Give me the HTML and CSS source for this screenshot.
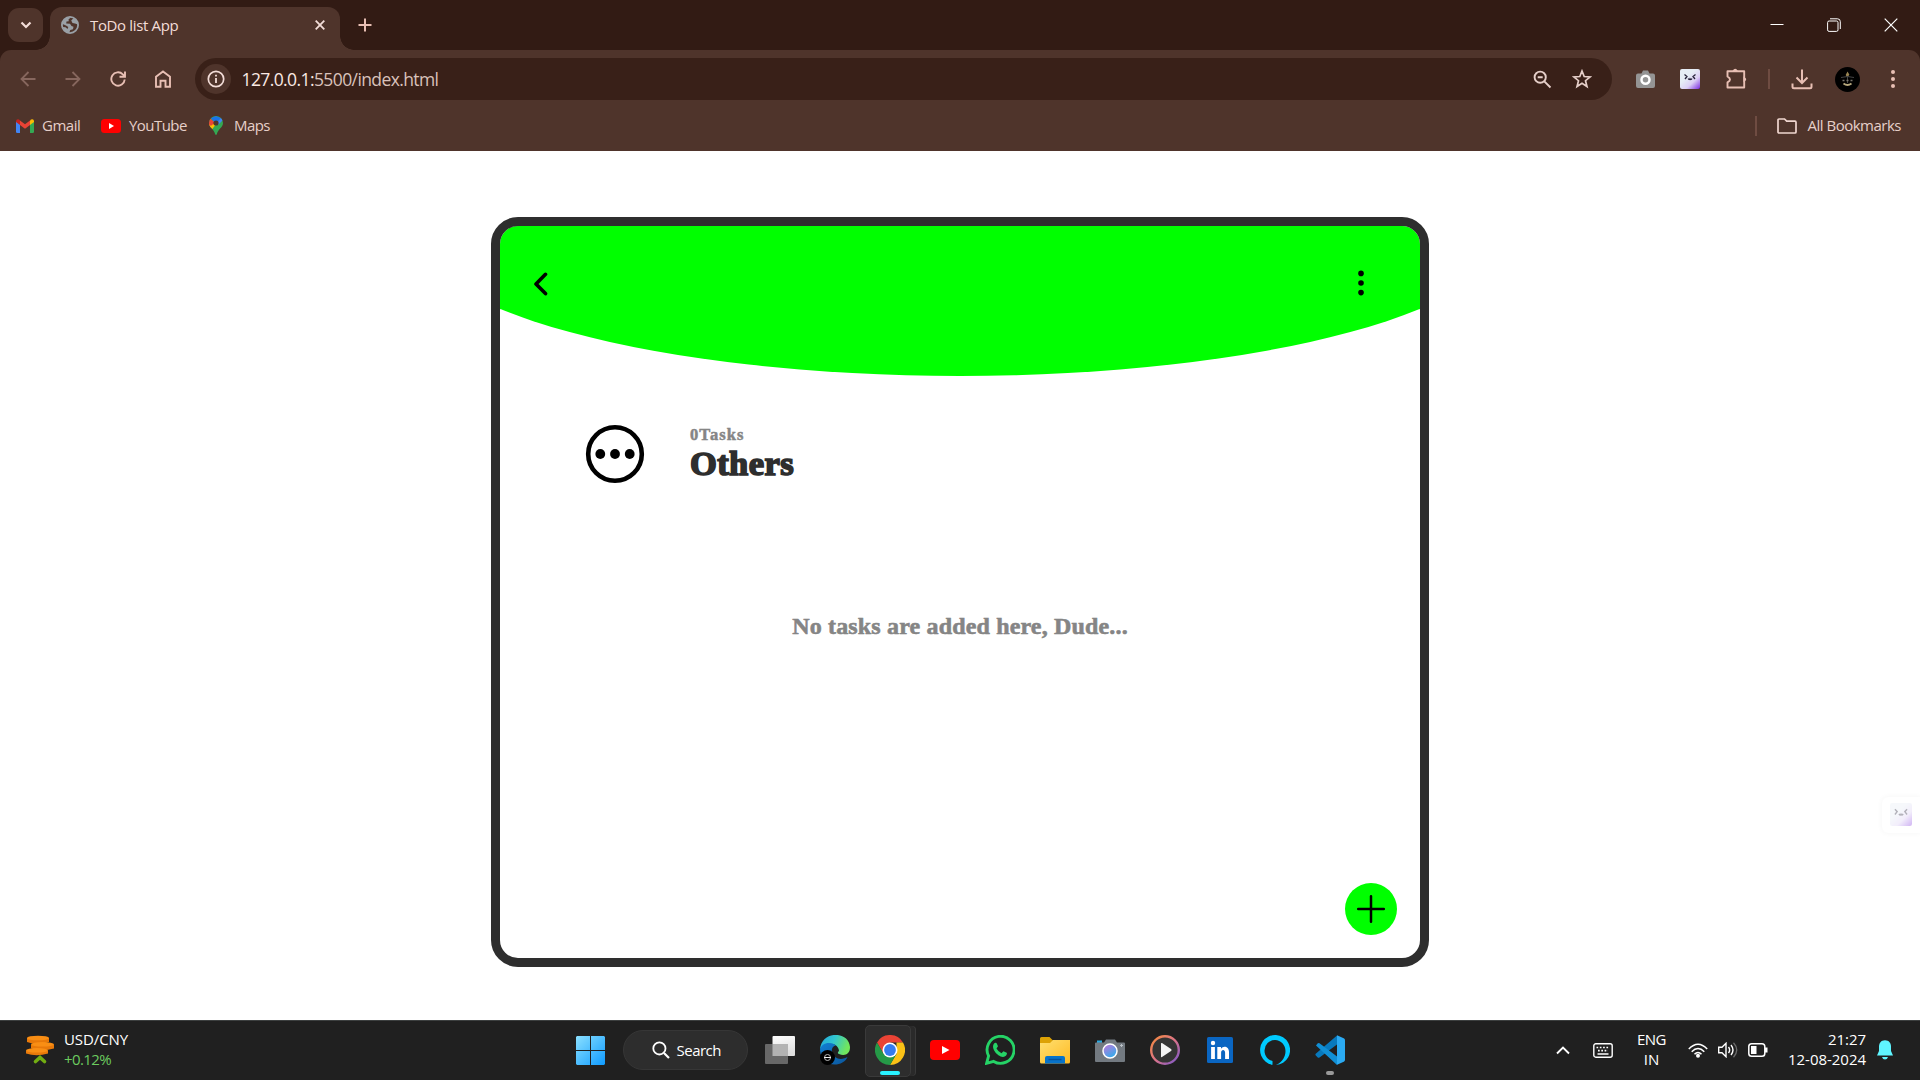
FILE: index.html
```html
<!DOCTYPE html>
<html lang="en">
<head>
<meta charset="utf-8">
<title>ToDo list App</title>
<link rel="stylesheet" href="styles.css">
</head>
<body>
<header class="browser">
  <div class="tabstrip">
    <button class="tab-search" aria-label="Search tabs"><svg width="12" height="8" viewBox="0 0 12 8"><path d="M1.5 1.5 6 6l4.500-4.500" fill="none" stroke="#f3ddd8" stroke-width="2.200"/></svg></button>
    <div class="tab">
      <svg class="globe" width="18" height="18" viewBox="0 0 18 18"><circle cx="9" cy="9" r="8.100" fill="none" stroke="#9aa0a6" stroke-width="1.800"/><path d="M2 5.500 5.500 1.500 10 1.300 7.500 3.500l.3 1.700-2.300.3-.3 2 3.800.2 1.500 2.300 2 .7-.5 2.500-2.700.8-1 2.500-4-1-3-4.500 3.200.3 2 1.700.8-2L5 9.500 1.500 8z" fill="#9aa0a6"/><path d="m12.500 2.200-2.300 2.300L11.500 7l2.500.5 3 1-.5-3.500z" fill="#9aa0a6"/></svg>
      <span class="tab-title">ToDo list App</span>
      <svg class="tab-close" width="10" height="10" viewBox="0 0 10 10"><path d="m.7.7 8.600 8.600m0-8.600L.7 9.300" stroke="#f3ddd8" stroke-width="1.800"/></svg>
    </div>
    <svg class="new-tab" width="14" height="14" viewBox="0 0 14 14"><path d="M7 .5v13M.5 7h13" stroke="#e8bfb4" stroke-width="2"/></svg>
    <div class="window-buttons">
      <svg width="14" height="14" viewBox="0 0 14 14"><path d="M.5 6.500h13" stroke="#fff" stroke-width="1"/></svg>
      <svg width="14" height="14" viewBox="0 0 14 14" fill="none" stroke="#fff"><rect x=".6" y="3" width="10.400" height="10.400" rx="1.500"/><path d="M3 .8h7.500a2.800 2.800 0 0 1 2.800 2.800v7.400"/></svg>
      <svg width="14" height="14" viewBox="0 0 14 14"><path d="m.7.7 12.600 12.600m0-12.600L.7 13.300" stroke="#fff" stroke-width="1.200"/></svg>
    </div>
  </div>
  <div class="toolbar">
    <nav class="nav-icons">
      <svg class="dim" width="16" height="16" viewBox="0 0 16 16"><path d="M15.500 8H1.500M8.500 1 1.500 8l7 7"/></svg>
      <svg class="dim" width="16" height="16" viewBox="0 0 16 16"><path d="M.5 8h14M7.500 1l7 7-7 7"/></svg>
      <svg width="16" height="16" viewBox="0 0 16 16"><path d="M14.700 8.500A6.700 6.700 0 1 1 12.800 3.300L15 5.500M15 .5v5.300H9.500" stroke-width="1.900"/></svg>
      <svg width="16" height="18" viewBox="0 0 16 18"><path d="M1 16.800V6.800L8 1.500l7 5.300v10h-4.500v-6h-5v6z" stroke-width="1.900"/></svg>
    </nav>
    <div class="omnibox">
      <span class="site-info"><svg width="18" height="18" viewBox="0 0 18 18"><circle cx="9" cy="9" r="7.700" fill="none" stroke="#f3ddd8" stroke-width="1.700"/><path d="M9 8v5M9 4.700v1.900" stroke="#f3ddd8" stroke-width="1.800"/></svg></span>
      <span class="url"><b>127.0.0.1:</b>5500/index.html</span>
      <svg class="zoom-icon" width="19" height="19" viewBox="0 0 19 19" fill="none" stroke="#e6cfc9" stroke-width="1.900"><circle cx="7.200" cy="7.200" r="5.600"/><path d="m11.300 11.300 6.200 6.200M4.700 7.200h5"/></svg>
      <svg class="star" width="20" height="20" viewBox="0 0 20 20"><path d="m10 2 2.200 5.500 5.900.4-4.600 3.800 1.500 5.800L10 14.300l-5 3.200 1.500-5.800-4.600-3.800 5.900-.4z" fill="none" stroke="#e6cfc9" stroke-width="1.700"/></svg>
    </div>
    <div class="extensions">
      <svg class="ext-camera" width="19" height="18" viewBox="0 0 19 18"><path d="M2 3.500h3.500L7 .5h5l1.500 3H17q2 0 2 2V16q0 2-2 2H2q-2 0-2-2V5.500q0-2 2-2z" fill="#949494"/><circle cx="9.500" cy="9.800" r="4" fill="#949494" stroke="#fff" stroke-width="2.500"/></svg>
      <svg class="ext-face" width="20" height="20" viewBox="0 0 20 20"><defs><linearGradient id="face" x1=".4" y1=".35" x2="1" y2="1"><stop stop-color="#e6edf5"/><stop offset=".45" stop-color="#dccff5"/><stop offset="1" stop-color="#7b2be0"/></linearGradient></defs><rect width="20" height="20" rx="2" fill="url(#face)"/><path d="m4.500 5.500 2.500 2-2 2.500M15.500 5.500l-2.500 2 2 2.500M8.200 9.500q1 1.800 1.800.3 1 1.500 1.900-.3" fill="none" stroke="#27233b" stroke-width="1.300"/></svg>
      <svg class="puzzle" width="22" height="22" viewBox="0 0 22 22"><path d="M2.500 3.200h16.700v16.300H2.500v-5.200q5-2.800 0-5.800z" fill="none" stroke="#e8bfb4" stroke-width="1.900" stroke-linejoin="round"/><path d="M18.500 8.500q5.500 2.800 0 5.600zM7.500 3q2.700-4.600 5.400 0z" fill="#e8bfb4"/></svg>
      <i class="divider"></i>
      <svg class="download" width="22" height="21" viewBox="0 0 22 21"><path d="M11 .5v13M5.500 8.500 11 14l5.500-5.500M1.500 14.500v3.300q0 1.500 1.500 1.500h16q1.500 0 1.500-1.500v-3.300" fill="none" stroke="#e8bfb4" stroke-width="2"/></svg>
      <svg class="avatar" width="25" height="25" viewBox="0 0 25 25"><circle cx="12.500" cy="12.500" r="12.500" fill="#000"/><path d="m12.500 4.500 1.800 3-1.800 3.500-1.800-3z" fill="#978352"/><path d="M6 10.500q6.500-2 13 0M12.500 9v7" stroke="#454545" fill="none"/><path d="M7.500 13.500h2m2 0h2m2 0h2" stroke="#77736a" stroke-width="1.500"/><path d="M8.500 16.500q4 3 8 0" stroke="#b6a77c" stroke-width="1.800" fill="none"/></svg>
      <svg class="menu-dots" width="4" height="18" viewBox="0 0 4 18" fill="#e8bfb4"><circle cx="2" cy="2" r="2"/><circle cx="2" cy="9" r="2"/><circle cx="2" cy="16" r="2"/></svg>
    </div>
  </div>
  <div class="bookmarks">
    <svg width="18" height="14" viewBox="0 0 18 14"><path d="M0 2v10.800Q0 14 1.200 14H4V5z" fill="#4285f4"/><path d="M18 2v10.800q0 1.200-1.200 1.200H14V5z" fill="#34a853"/><path d="M14 1.500V6l4-3V2q-.3-2.600-3-1.500z" fill="#fbbc04"/><path d="M0 2.500V3l4 3V1.500L3 .5Q.3-.3 0 2.500z" fill="#c5221f"/><path d="m4 1.500 5 3.800 5-3.800V6L9 9.800 4 6z" fill="#ea4335"/></svg>
    <span class="bm-gmail">Gmail</span>
    <svg width="20" height="14" viewBox="0 0 20 14"><rect width="20" height="14" rx="3.500" fill="red"/><path d="m8 4 5 3-5 3z" fill="#fff"/></svg>
    <span class="bm-youtube">YouTube</span>
    <svg width="14" height="19" viewBox="0 0 14 19"><defs><clipPath id="pin"><path d="M7 0a7 7 0 0 1 7 7c0 4.500-5 6-6.200 11.300q-.8 1.400-1.600 0C5 13 0 11.500 0 7a7 7 0 0 1 7-7z"/></clipPath></defs><g clip-path="url(#pin)"><path d="M0 0h14v19H0z" fill="#34a853"/><path d="M0 14V8l5.500-3L12 1.500 3 13.500z" fill="#fbbc04"/><path d="M0 1.500 6 6.500 2.500 9.500H0z" fill="#ea4335"/><path d="M1.800 2 7 0l5.300 2L7 8z" fill="#1a73e8"/><path d="m12.200 1.800-5 6L9 9l5-5z" fill="#4285f4"/></g><circle cx="7" cy="7" r="2.600" fill="#4f342b"/></svg>
    <span class="bm-maps">Maps</span>
    <i class="divider bookmarks-divider"></i>
    <svg width="20" height="16" viewBox="0 0 20 16"><path d="M2 1h5.500l2.200 2.200H18q1 0 1 1V14q0 1-1 1H2q-1 0-1-1V2q0-1 1-1z" fill="none" stroke="#f0d6cf" stroke-width="1.700"/></svg>
    <span class="bm-all">All Bookmarks</span>
  </div>
</header>

<main class="page">
  <section class="card">
    <header class="card-header">
      <svg width="15" height="24" viewBox="0 0 15 24"><path d="M12.500 2.300 3 12l9.500 9.600" fill="none" stroke="#000" stroke-width="3.600" stroke-linecap="round" stroke-linejoin="round"/></svg>
      <svg class="card-menu" width="6" height="26" viewBox="0 0 6 26"><circle cx="3" cy="3.400" r="2.800"/><circle cx="3" cy="13" r="2.800"/><circle cx="3" cy="22.600" r="2.800"/></svg>
    </header>
    <div class="category">
      <svg width="60" height="60" viewBox="0 0 60 60"><circle cx="30" cy="30" r="26.800" fill="none" stroke="#000" stroke-width="4.600"/><circle cx="15.300" cy="30" r="4.900"/><circle cx="30" cy="30" r="4.900"/><circle cx="44.700" cy="30" r="4.900"/></svg>
      <div class="category-text">
        <p class="task-count">0Tasks</p>
        <h1>Others</h1>
      </div>
    </div>
    <p class="empty">No tasks are added here, Dude...</p>
    <button class="add" aria-label="Add task"><svg width="30" height="30" viewBox="0 0 30 30"><path d="M15 2.200v25.600M2.200 15h25.600" stroke="#000" stroke-width="2.500" stroke-linecap="round"/></svg></button>
  </section>
  <div class="floating-helper"><svg width="22" height="23" viewBox="0 0 20 20" preserveAspectRatio="none"><rect width="20" height="20" rx="2" fill="url(#face)"/><path d="m4.500 5.500 2 2-2 2.500M15.500 5.500l-2 2 2 2.500M8.200 9.500q1 1.800 1.800.3 1 1.500 1.900-.3" fill="none" stroke="#27233b" stroke-width="1.300"/></svg></div>
</main>

<footer class="taskbar">
  <div class="widget">
    <svg width="29" height="30" viewBox="0 0 29 30"><g fill="#e8790a"><path d="M1 3v4q10.500 4 22 0V3zM5 9.500v4q11 3.500 23 0v-4zM0 15.500v3q10.500 3.500 22 0v-3z"/></g><g fill="#f98e14"><ellipse cx="12" cy="3" rx="11" ry="2.300"/><ellipse cx="16.500" cy="9.300" rx="11.500" ry="2.300"/><ellipse cx="11" cy="15.300" rx="11" ry="2.300"/></g><path d="m9.500 26.500 4.500-4 4.500 4" fill="none" stroke="#72ad12" stroke-width="3.600" stroke-linecap="round"/></svg>
    <div class="widget-text"><span class="pair">USD/CNY</span><span class="change">+0.12%</span></div>
  </div>
  <div class="apps">
    <svg class="start" width="29" height="29" viewBox="0 0 29 29"><defs><linearGradient id="win" x2="1" y2="1" gradientUnits="objectBoundingBox"><stop stop-color="#8be0ff"/><stop offset="1" stop-color="#0f9bff"/></linearGradient><clipPath id="panes"><path d="M1 0h13v14H0V1zM15 0h13l1 1v13H15zM0 15h14v14H1l-1-1zM15 15h14v13l-1 1H15z"/></clipPath></defs><path d="M0 0h29v29H0z" fill="url(#win)" clip-path="url(#panes)"/></svg>
    <div class="search"><svg width="18" height="18" viewBox="0 0 18 18"><circle cx="7.400" cy="7.400" r="6.100" fill="none" stroke="#fff" stroke-width="1.800"/><path d="m12 12 5 5" stroke="#fff" stroke-width="2.200"/></svg><span>Search</span></div>
    <div class="app"><svg width="30" height="30" viewBox="0 0 30 30"><defs><linearGradient id="tv" y2="1" x2=".3"><stop stop-color="#fff"/><stop offset="1" stop-color="#dedede"/></linearGradient></defs><rect x="7.500" y="1" width="22.500" height="20" rx="1" fill="url(#tv)"/><rect x="0" y="9" width="23" height="20" rx="1" fill="#686868"/><rect x="7.500" y="9" width="15.500" height="12" fill="#b3b3b3"/></svg></div>
    <div class="app"><svg width="30" height="30" viewBox="0 0 30 30"><defs><linearGradient id="edgeTop" x2="1" y2=".3"><stop stop-color="#21a7dd"/><stop offset=".5" stop-color="#31c5d0"/><stop offset="1" stop-color="#71e65d"/></linearGradient><linearGradient id="edgeLow" y2="1"><stop stop-color="#117fd5"/><stop offset="1" stop-color="#0b569b"/></linearGradient></defs><path d="M0 14C2-5 29-4 30 12c0 8-6 9-11 7-2-1-1-2 0-3 0-6-9-12-19-2z" fill="url(#edgeTop)"/><path d="M0 15C1 8 10 6 16 10.500c-5 .5-6 8-1 11.500 4 3 9 2 12.500 0C23 33 1 33 0 15z" fill="url(#edgeLow)"/><circle cx="7.500" cy="22.500" r="7.500" fill="#000"/><circle cx="7.500" cy="22.500" r="3" fill="none" stroke="#bbb"/><path d="M4 22.500h7" stroke="#eee"/></svg></div>
    <div class="app active"><svg width="30" height="30" viewBox="0 0 30 30"><path d="M2 7.500a15 15 0 0 1 26 0H15L8.500 18.700z" fill="#ea4335"/><path d="M28 7.500A15 15 0 0 1 15 30l6.500-11.300L21.500 7.500z" fill="#fbc116"/><path d="M2 7.500 8.500 18.700 15 22.500l6.500-3.800L15 30A15 15 0 0 1 2 7.500z" fill="#259947"/><circle cx="15" cy="15" r="7.500" fill="#fff"/><circle cx="15" cy="15" r="5.900" fill="#367bef"/></svg></div>
    <div class="app"><svg width="30" height="30" viewBox="0 0 30 30"><rect y="5" width="30" height="20" rx="4" fill="red"/><path d="m12 11 7.500 4-7.500 4z" fill="#fff"/></svg></div>
    <div class="app"><svg width="30" height="30" viewBox="0 0 30 30"><path d="m1.600 28.300 2-7.300A13.500 13.500 0 1 1 8.700 26.400z" fill="none" stroke="#25d366" stroke-width="2.900"/><path d="M9.700 8q1.600-1 2.300 1l1 2.300-1.500 2.200q1.700 3.200 5 4.800l1.900-2.100 3.300 1.600c.8.500-.2 4.200-3.800 4.200C12 21.500 4.700 12 9.700 8z" fill="#25d366"/></svg></div>
    <div class="app"><svg width="30" height="30" viewBox="0 0 30 30"><defs><linearGradient id="fold" x2="1" y2="1"><stop stop-color="#ffdf70"/><stop offset="1" stop-color="#ffbb24"/></linearGradient></defs><path d="M0 3.500Q0 2 1.500 2h8L13 5.500h15.500Q30 5.500 30 7v8H0z" fill="#dda205"/><path d="M0 8h10l3-3h17v22q0 1.500-1.500 1.500h-27Q0 28.500 0 27z" fill="url(#fold)"/><path d="M5 28.500V23q0-2 2-2h16q2 0 2 2v5.500z" fill="#0873ca"/><path d="M8.500 24.500h13" stroke="#07529d" stroke-width="1.400"/></svg></div>
    <div class="app"><svg width="30" height="30" viewBox="0 0 30 30"><defs><linearGradient id="lens" x1=".2" x2=".8" y2="1"><stop stop-color="#bd78db"/><stop offset="1" stop-color="#27b1ed"/></linearGradient></defs><path d="M2 5.500h5v3H2z" fill="#29a9e2"/><path d="M1 7.500h8l2-3h9l2 3h7q1 0 1 1V26q0 1-1 1H1q-1 0-1-1V8.500q0-1 1-1z" fill="#737a81"/><circle cx="15" cy="16" r="7" fill="url(#lens)" stroke="#fff" stroke-width="1.500"/><path d="M26.500 9v3M25 10.500h3" stroke="#bac0c5"/></svg></div>
    <div class="app"><svg width="30" height="30" viewBox="0 0 30 30"><defs><linearGradient id="ring" x2="1" y2="1"><stop stop-color="#f58b39"/><stop offset=".5" stop-color="#dc7489"/><stop offset="1" stop-color="#7655cd"/></linearGradient></defs><circle cx="15" cy="15" r="13.800" fill="#343434" stroke="url(#ring)" stroke-width="2.400"/><path d="M11 8.500q0-1 1-.4l9 5.900q1.400 1 0 2l-9 5.900q-1 .6-1-.4z" fill="#f4f4f4"/></svg></div>
    <div class="app"><svg width="30" height="30" viewBox="0 0 30 30"><rect x="2" y="2" width="26" height="26" rx="1.500" fill="#0a66c2"/><circle cx="8" cy="8" r="2.200" fill="#fff"/><path d="M6.100 12h3.800v12H6.100zM12.300 12H16v1.700c2-3.200 8-2.800 8 3.400V24h-3.900v-6.300c0-3.600-4-3.300-4 0V24h-3.800z" fill="#fff"/></svg></div>
    <div class="app"><svg width="30" height="30" viewBox="0 0 30 30"><path d="M12.500 29.800A15 15 0 1 1 16 30C23 27 25.500 21 25.500 16 25.500 10 21 5 15 5A10.500 10.500 0 0 0 4.500 15.500c0 5.500 3.500 9.500 8 10.500z" fill="#00caff"/></svg></div>
    <div class="app running"><svg width="30" height="30" viewBox="0 0 30 30"><path d="m1 18.500 21-18L24 8 4.500 22.500q-1 .8-2-.2L.8 20.500q-.9-1 .2-2z" fill="#0879bd"/><path d="m1 10.500 1.500-2q1-1 2-.2L24 23l-2 7z" fill="#118fd5"/><path d="m22 .3 6.700 3Q30 4 30 5.300v19.400q0 1.300-1.300 2L22 29.800z" fill="#2baaf2"/></svg></div>
  </div>
  <div class="tray">
    <svg class="chevron" width="14" height="9" viewBox="0 0 14 9"><path d="m1 7.500 6-6 6 6" fill="none" stroke="#fff" stroke-width="1.900"/></svg>
    <svg class="keyboard" width="20" height="15" viewBox="0 0 20 15"><rect x=".8" y=".8" width="18.400" height="13.400" rx="2" fill="none" stroke="#fff" stroke-width="1.400"/><path d="M3.500 4.500h13M5 7.700h10" stroke="#fff" stroke-width="1.700" stroke-dasharray="1.700 1.600"/><path d="M4.500 11h11" stroke="#fff" stroke-width="1.500"/></svg>
    <div class="language"><span class="eng">ENG</span><span>IN</span></div>
    <svg class="wifi" width="20" height="15" viewBox="0 0 20 15"><path d="M.8 6q9.200-9.500 18.400 0M3.700 8.700q6.300-6.500 12.600 0M6.500 11.300q3.500-3.600 7 0" fill="none" stroke="#fff" stroke-width="1.500"/><circle cx="10" cy="12.800" r="2" fill="#fff"/></svg>
    <svg class="volume" width="20" height="16" viewBox="0 0 20 16"><path d="M.7 5.200H4L8 1.300v13.400l-4-3.900H.7zM10.500 5q2.300 3 0 6M13 3q4 5 0 10" fill="none" stroke="#fff" stroke-width="1.400"/><path d="M15.500.8q6.500 7.200 0 14.400" fill="none" stroke="#6b6b6b" stroke-width="1.300"/></svg>
    <svg class="battery" width="20" height="14" viewBox="0 0 20 14"><rect x=".8" y=".8" width="16" height="12.400" rx="2.800" fill="none" stroke="#fff" stroke-width="1.500"/><path d="M3 3h5.500v8H3zM17 4.500h2.500v5H17z" fill="#fff"/></svg>
    <div class="clock"><span class="time">21:27</span><span class="date">12-08-2024</span></div>
    <svg class="bell" width="16" height="20" viewBox="0 0 16 20"><path d="M8 .3c4 0 6 3 6 6.200V11l2 4.500H0L2 11V6.500C2 3.300 4 .3 8 .3zM5 17h6q-.8 2.500-3 2.500T5 17z" fill="#5ff5ff"/></svg>
  </div>
</footer>
</body>
</html>
```

FILE: styles.css
```css
* { box-sizing: border-box; }

body {
  margin: 0;
  height: 1080px;
  display: flex;
  flex-direction: column;
  overflow: hidden;
  background: #fff;
  font-family: "Open Sans", "Noto Sans", sans-serif;
}

svg { display: block; flex: none; }
span { white-space: nowrap; }
button { border: 0; padding: 0; }
p, h1 { margin: 0; }

/* Browser frame */
.browser { height: 151px; background: #321b14; color: #e6cfc9; flex: none; }

.tabstrip { height: 50px; display: flex; align-items: center; padding-left: 8px; }

.tab-search {
  width: 35px;
  height: 34px;
  border-radius: 11px;
  background: #4f342b;
  display: grid;
  place-items: center;
}

.tab {
  position: relative;
  align-self: flex-end;
  width: 290px;
  height: 43px;
  margin-left: 7px;
  padding: 0 15px 7px 11px;
  display: flex;
  align-items: center;
  border-radius: 12px 12px 0 0;
  background: #4f342b;
  color: #f3ddd8;
}

.tab::before, .tab::after {
  content: "";
  position: absolute;
  bottom: 0;
  width: 14px;
  height: 14px;
}

.tab::before { left: -14px; background: radial-gradient(circle at 0 0, transparent 13.500px, #4f342b 14px); }
.tab::after { right: -14px; background: radial-gradient(circle at 100% 0, transparent 13.500px, #4f342b 14px); }

.tab-title { margin-left: 11px; font-size: 15px; letter-spacing: -.35px; }
.tab-close { margin-left: auto; }
.new-tab { margin-left: 18px; }
.window-buttons { display: flex; gap: 43px; margin: 0 22px 0 auto; }

.toolbar {
  height: 58px;
  display: flex;
  align-items: center;
  padding-left: 20px;
  background: #4f342b;
  border-radius: 11px 11px 0 0;
}

.nav-icons { display: flex; align-items: center; gap: 29px; width: 175px; fill: none; stroke: #e8bfb4; stroke-width: 1.800; }
.nav-icons .dim { stroke: #87675e; }

.omnibox {
  width: 1417px;
  height: 42px;
  padding-left: 6px;
  display: flex;
  align-items: center;
  border-radius: 21px;
  background: #392018;
}

.site-info { width: 30px; height: 30px; border-radius: 50%; background: #4f342b; display: grid; place-items: center; }
.url { margin-left: 10.500px; font-size: 17.500px; letter-spacing: -.6px; color: #d9c2bb; }
.url b { font-weight: 400; color: #fbe9e4; }
.zoom-icon { margin-left: auto; }
.star { margin: 0 20px 0 20px; }

.extensions { display: flex; align-items: center; padding-left: 24px; }
.ext-face { margin-left: 25px; }
.puzzle { margin-left: 25px; }
.divider { width: 2px; height: 20px; background: #6f4c42; }
.extensions .divider { margin-left: 21px; }
.download { margin-left: 21px; }
.avatar { margin-left: 22px; }
.menu-dots { margin-left: 31px; }

.bookmarks {
  height: 43px;
  display: flex;
  align-items: center;
  padding: 0 19px 8px 16px;
  background: #4f342b;
  font-size: 15px;
}

.bookmarks span { margin-top: -2px; }
.bm-gmail { width: 59px; margin-left: 8px; letter-spacing: -.5px; }
.bm-youtube { width: 80px; margin-left: 8px; letter-spacing: -.55px; }
.bm-maps { margin-left: 11px; letter-spacing: -.55px; }
.bookmarks-divider { margin: 0 20px 0 auto; }
.bm-all { margin-left: 11px; letter-spacing: -.5px; }

/* To-do page */
.page { position: relative; height: 869px; padding-top: 66px; flex: none; }

.card {
  position: relative;
  width: 938px;
  height: 750px;
  margin: 0 auto;
  border: 9px solid #2e2e2e;
  border-radius: 27px;
  overflow: hidden;
  font-family: "Liberation Serif", serif;
  font-weight: 700;
}

.card-header {
  position: relative;
  height: 150px;
  padding: 46px 56px 0 33px;
  display: flex;
  align-items: flex-start;
  justify-content: space-between;
}

.card-menu { margin-top: -2px; }

.card-header::before {
  content: "";
  position: absolute;
  z-index: -1;
  left: -10%;
  bottom: 0;
  width: 120%;
  height: 300px;
  border-radius: 50%;
  background: #0f0;
}

.category { display: flex; align-items: center; gap: 45px; padding: 48px 0 0 85px; }
.category-text { height: 60px; }
.task-count { font-size: 16.500px; line-height: 19px; letter-spacing: 1.100px; color: #858585; -webkit-text-stroke: .5px; padding-top: 1px; }
h1 { font-size: 34.500px; line-height: 36px; padding-top: 1px; letter-spacing: .4px; color: #2e2e2e; -webkit-text-stroke: 1.700px; }
.empty { margin-top: 128px; text-align: center; font-size: 24px; line-height: 28px; letter-spacing: .16px; color: #858585; -webkit-text-stroke: .6px; }

.add {
  position: absolute;
  right: 23px;
  bottom: 23px;
  width: 52px;
  height: 52px;
  border-radius: 50%;
  background: #0f0;
  display: grid;
  place-items: center;
}

.floating-helper {
  position: absolute;
  top: 646px;
  right: 0;
  width: 38px;
  height: 36px;
  padding: 6px 8px;
  border-radius: 6px 0 0 6px;
  opacity: .35;
  background: #fff;
  box-shadow: 0 0 4px rgba(0, 0, 0, .1);
}

/* Windows taskbar */
.taskbar {
  height: 60px;
  padding-bottom: 1px;
  flex: none;
  display: grid;
  grid-template-columns: 1fr 769px 1fr;
  align-items: center;
  border-top: 1px solid #3c3f3f;
  background: #202020;
  color: #fff;
  font-size: 15px;
  line-height: 20px;
}

.widget { display: flex; align-items: center; gap: 9px; padding-left: 26px; }
.widget-text, .language, .clock { display: flex; flex-direction: column; margin-top: -3px; }
.pair { letter-spacing: -.1px; }
.change { color: #6ccb5f; letter-spacing: -.6px; }

.apps { display: flex; align-items: center; }

.search {
  flex: none;
  width: 125px;
  height: 40px;
  margin: 0 4.500px 0 18px;
  padding-left: 28px;
  display: flex;
  align-items: center;
  gap: 7px;
  border: 1px solid #363636;
  border-radius: 20px;
  background: #2d2d2d;
}

.search span { letter-spacing: -.5px; }

.app { position: relative; width: 55px; height: 50px; display: grid; place-items: center; flex: none; }
.app svg { position: relative; }

.active::before {
  content: "";
  position: absolute;
  left: 3px;
  top: 0;
  width: 44px;
  height: 50px;
  border: 1px solid #3a3a3a;
  border-radius: 5px;
  background: #2d2d2d;
  box-shadow: 5px 0 0 -1px #2a2a2a, 6px 0 0 -1px #3a3a3a;
}

.active::after, .running::after {
  content: "";
  position: absolute;
  bottom: 0;
  left: 18px;
  width: 20px;
  height: 4px;
  border-radius: 2px;
  background: #28f1ff;
}

.running::after { left: 24px; width: 8px; background: #9a9a9a; }

.tray { display: flex; align-items: center; padding-right: 27px; justify-content: flex-end; }
.keyboard { margin-left: 23px; }
.language { width: 29px; margin-left: 24px; align-items: center; }
.eng { letter-spacing: -.5px; }
.wifi { margin-left: 22px; }
.volume { margin-left: 10px; }
.battery { margin-left: 10px; }
.clock { width: 78px; margin-left: 20px; align-items: flex-end; letter-spacing: -.03px; }
.bell { margin-left: 11px; }
```
